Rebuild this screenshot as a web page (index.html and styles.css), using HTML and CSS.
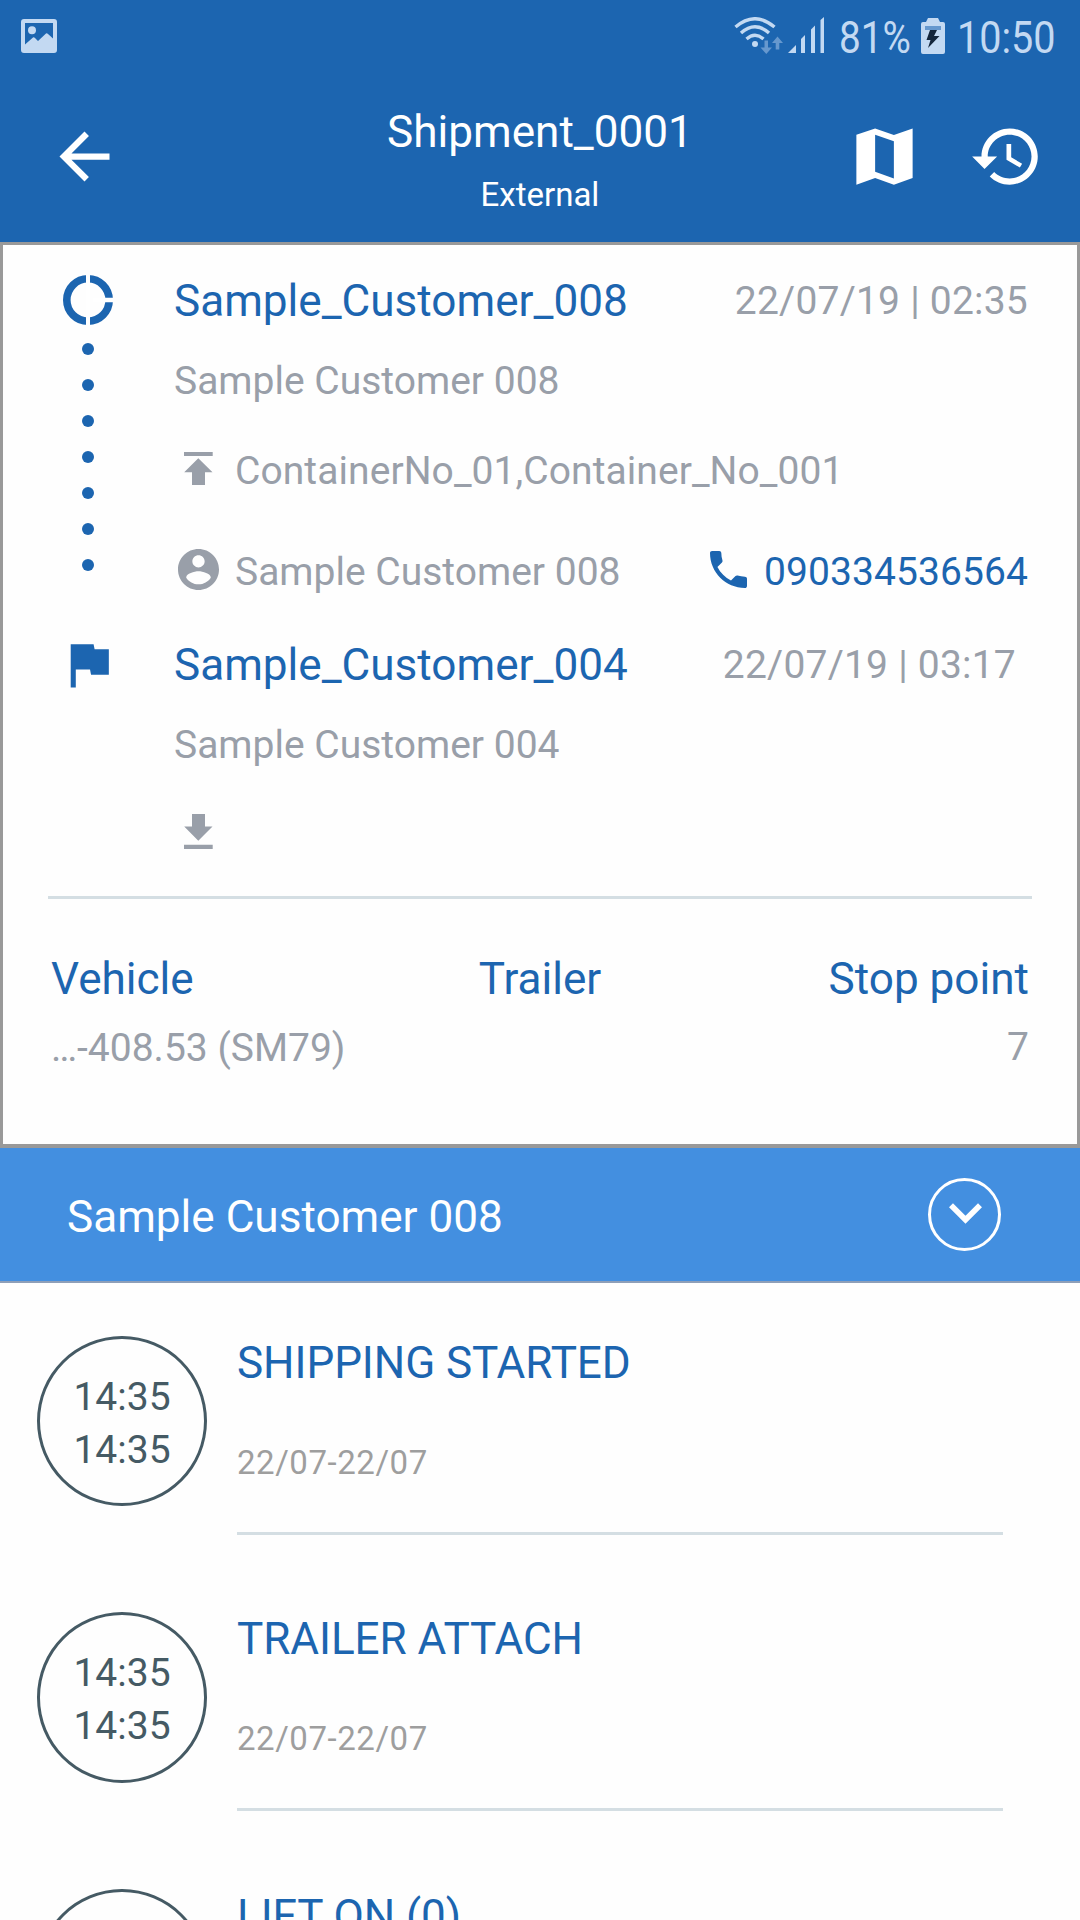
FILE: index.html
```html
<!DOCTYPE html>
<html lang="en">
<head>
<meta charset="utf-8">
<title>Shipment_0001</title>
<link rel="stylesheet" href="styles.css">
</head>
<body>
<header class="top">
  <div class="status">
    <svg class="status-picture" width="36" height="34" viewBox="0 0 36 34">
      <path fill-rule="evenodd" d="M3 0H33Q36 0 36 3V31Q36 34 33 34H3Q0 34 0 31V3Q0 0 3 0ZM4 4V25.500L12 18.500Q13 18 14 19L17 22L25 14.500Q26 14 27 15L32 19.500V4Z"/>
      <circle cx="11" cy="11.300" r="4"/>
    </svg>
    <div class="status-right">
      <svg class="wifi" width="50" height="38" viewBox="0 0 50 38">
        <g fill="none" stroke="#c3d9f2" stroke-width="3.400">
          <path d="M1.500 10Q21 -6.500 40.500 10"/>
          <path d="M7 16Q21 3.500 35 16"/>
          <path d="M12.500 22Q21 14.500 29.500 22"/>
        </g>
        <circle cx="21" cy="27" r="3"/>
        <path class="faint" d="M30.500 23.500h3.500v7h4l-5.700 6.500-5.800-6.500h4zM41.700 32.500h3.600v-6.500h3.700l-5.500-6.500-5.500 6.500h3.700z"/>
      </svg>
      <svg class="signal" width="37" height="36" viewBox="0 0 37 36">
        <path d="M0 36L8 28V36ZM13 22L17 18V36H13ZM23 12.500L27 8.500V36H23ZM32.500 3L36 0V36H32.500Z"/>
      </svg>
      <span class="status-text battery-level">81%</span>
      <svg class="battery" width="24" height="36" viewBox="0 0 24 36">
        <path d="M7 0H17L19 4H22Q24 4 24 6V34Q24 36 22 36H2Q0 36 0 34V6Q0 4 2 4H5Z"/>
        <path class="faint" d="M4 8H20V12H4Z"/>
        <path class="bolt" d="M9 12H16L13 18H18.500L7 30L9.500 22H5.500Z"/>
      </svg>
      <span class="status-text clock">10:50</span>
    </div>
  </div>
  <div class="appbar">
    <svg class="icon" width="75" height="75" viewBox="0 0 24 24"><path d="M20 11H7.830l5.590-5.590L12 4l-8 8 8 8 1.410-1.410L7.830 13H20v-2z"/></svg>
    <div class="titles">
      <h1 class="title">Shipment_0001</h1>
      <p class="subtitle">External</p>
    </div>
    <div class="actions">
      <svg class="icon" width="75" height="75" viewBox="0 0 24 24"><path fill-rule="evenodd" d="M3 5L9 3L15 5.100L21 3V18.900L15 21L9 18.900L3 21ZM9 5V16.900L15 19V7.100Z"/></svg>
      <svg class="icon" width="75" height="75" viewBox="0 0 24 24"><path d="M13 3c-4.970 0-9 4.030-9 9H1l3.890 3.890.07.14L9 12H6c0-3.870 3.130-7 7-7s7 3.130 7 7-3.130 7-7 7c-1.930 0-3.680-.79-4.940-2.060l-1.420 1.420C8.270 19.990 10.510 21 13 21c4.970 0 9-4.030 9-9s-4.030-9-9-9zm-1 5v5l4.280 2.540.72-1.210-3.500-2.080V8H12z"/></svg>
    </div>
  </div>
</header>

<section class="card">
  <div class="stop stop-start">
    <div class="rail">
      <svg width="50" height="50" viewBox="0 0 50 50">
        <circle cx="25" cy="25" r="21.200" fill="none" stroke="#1c65b0" stroke-width="7.600"/>
        <path d="M23 0H27V50H23ZM30 22.800H50V27.200H30Z" fill="#fff"/>
      </svg>
      <div class="dots"><i></i><i></i><i></i><i></i><i></i><i></i><i></i></div>
    </div>
    <div class="stop-body">
      <div class="row">
        <h2 class="name">Sample_Customer_008</h2>
        <span class="grey date">22/07/19 | 02:35</span>
      </div>
      <p class="grey address">Sample Customer 008</p>
      <div class="detail container-row">
        <svg class="detail-icon" width="41" height="33" viewBox="0 0 41 33"><path d="M6 0H34.700V4H6ZM20.300 6.300L34.500 20.300H27V33H14V20.300H6.200Z"/></svg>
        <span class="grey containers">ContainerNo_01,Container_No_001</span>
      </div>
      <div class="detail contact">
        <svg class="detail-icon contact-icon" width="41" height="41" viewBox="2 2 20 20"><path d="M12 2C6.480 2 2 6.480 2 12s4.480 10 10 10 10-4.480 10-10S17.520 2 12 2zm0 3c1.660 0 3 1.340 3 3s-1.340 3-3 3-3-1.340-3-3 1.340-3 3-3zm0 14.200c-2.500 0-4.710-1.280-6-3.220.03-1.990 4-3.080 6-3.080 1.990 0 5.970 1.090 6 3.080-1.290 1.940-3.500 3.220-6 3.220z"/></svg>
        <span class="grey">Sample Customer 008</span>
        <a class="phone">
          <svg class="phone-icon" width="37" height="37" viewBox="3 3 18 18"><path d="M6.620 10.790c1.440 2.830 3.760 5.140 6.590 6.590l2.200-2.200c.27-.27.67-.36 1.020-.24 1.120.37 2.330.57 3.570.57.55 0 1 .45 1 1V20c0 .55-.45 1-1 1-9.390 0-17-7.610-17-17 0-.55.45-1 1-1h3.500c.55 0 1 .45 1 1 0 1.250.2 2.450.57 3.570.11.35.03.74-.25 1.020l-2.200 2.200z"/></svg>
          090334536564
        </a>
      </div>
    </div>
  </div>
  <div class="stop stop-end">
    <div class="rail">
      <svg class="flag" width="61" height="61" viewBox="0 0 24 24"><path d="M14.400 6L14 4H5v17h2v-7h5.600l.4 2h7V6z"/></svg>
    </div>
    <div class="stop-body">
      <div class="row">
        <h2 class="name">Sample_Customer_004</h2>
        <span class="grey date">22/07/19 | 03:17</span>
      </div>
      <p class="grey address">Sample Customer 004</p>
      <svg class="detail-icon unload" width="41" height="35" viewBox="0 0 41 35"><path d="M14 0H27V12.500H34.500L20.300 26.700L6.200 12.500H14ZM6 30.700H34.700V35H6Z"/></svg>
    </div>
  </div>
  <div class="summary">
    <div class="cell">
      <h3 class="label">Vehicle</h3>
      <p class="grey value">…-408.53 (SM79)</p>
    </div>
    <div class="cell cell-mid">
      <h3 class="label">Trailer</h3>
    </div>
    <div class="cell cell-end">
      <h3 class="label">Stop point</h3>
      <p class="grey value">7</p>
    </div>
  </div>
</section>

<section class="group">
  <h2 class="group-name">Sample Customer 008</h2>
  <div class="toggle">
    <svg width="35" height="23" viewBox="0 0 35 23"><path d="M3 3.200L17.500 17.700L32 3.200" fill="none" stroke="#fff" stroke-width="5.600"/></svg>
  </div>
</section>

<ul class="events">
  <li class="event">
    <div class="times"><span>14:35</span><span>14:35</span></div>
    <div class="event-body">
      <h3 class="event-name">SHIPPING STARTED</h3>
      <p class="event-date">22/07-22/07</p>
    </div>
  </li>
  <li class="event">
    <div class="times"><span>14:35</span><span>14:35</span></div>
    <div class="event-body">
      <h3 class="event-name">TRAILER ATTACH</h3>
      <p class="event-date">22/07-22/07</p>
    </div>
  </li>
  <li class="event">
    <div class="times"></div>
    <div class="event-body">
      <h3 class="event-name">LIFT ON (0)</h3>
    </div>
  </li>
</ul>
</body>
</html>
```
FILE: styles.css
```css
* {
  box-sizing: border-box;
  margin: 0;
  padding: 0;
}

html,
body {
  width: 1080px;
  height: 1920px;
  overflow: hidden;
}

body {
  background: #fefefe;
  color: #1c65b0;
  font: 400 39px/46px Roboto, "Liberation Sans", sans-serif;
}

h1,
h2,
h3 {
  font-size: 44.100px;
  line-height: 54px;
  font-weight: 400;
  white-space: nowrap;
}

svg {
  display: block;
  flex: none;
}

/* Header */

.top {
  height: 242px;
  background: #1c65b0;
  color: #fff;
}

.status {
  display: flex;
  justify-content: space-between;
  align-items: flex-start;
  height: 72px;
  padding: 0 25px 0 21px;
  color: #c3d9f2;
  fill: #c3d9f2;
}

.status-picture {
  margin-top: 19px;
}

.status-right {
  display: flex;
  align-items: flex-start;
}

.wifi {
  margin-top: 17px;
}

.signal {
  margin: 17px 14px 0 4px;
}

.battery {
  margin: 18px 12px 0 11px;
}

.faint {
  fill: #6698ce;
}

.bolt {
  fill: #14263c;
}

.status-text {
  font-size: 45px;
  line-height: 53px;
  margin-top: 11px;
  transform: scaleX(0.87);
  transform-origin: left;
}

.battery-level {
  width: 71px;
  transform: scaleX(0.86);
}

.clock {
  width: 98px;
  transform: scaleX(0.88);
}

.appbar {
  display: grid;
  grid-template-columns: 1fr auto 1fr;
  height: 170px;
  padding: 0 36px 0 47px;
}

.appbar > .icon,
.actions {
  margin-top: 47px;
}

.icon {
  fill: #fff;
}

.titles {
  margin: 33px 0 0 -11px;
  text-align: center;
}

.subtitle {
  margin-top: 16px;
  font-size: 33px;
  line-height: 39px;
}

.actions {
  display: flex;
  justify-content: flex-end;
  gap: 47px;
}

/* Route card */

.card {
  height: 906px;
  border: 3px solid #999;
  border-bottom-width: 4px;
  padding: 29px 45px 0;
  background: #fefefe;
}

.grey {
  color: #999fa9;
  white-space: nowrap;
}

.stop {
  display: grid;
  grid-template-columns: 80px 1fr;
  column-gap: 46px;
  padding-right: 4px;
}

.stop-start {
  height: 364px;
}

.stop-end {
  height: 258px;
}

.rail {
  display: flex;
  flex-direction: column;
  align-items: center;
  padding-top: 1px;
}

.dots {
  display: flex;
  flex-direction: column;
  gap: 24px;
  margin-top: 18px;
}

.dots i {
  width: 12px;
  height: 12px;
  border-radius: 50%;
  background: #1c65b0;
}

.flag {
  margin-top: -5px;
  fill: #1c65b0;
}

.row {
  display: flex;
  justify-content: space-between;
}

.date {
  margin-top: 4px;
  letter-spacing: 0.220px;
}

.stop-end .date {
  margin-right: 12px;
}

.address {
  margin-top: 30px;
}

.detail {
  display: flex;
  align-items: flex-start;
}

.container-row {
  margin-top: 44px;
}

.containers {
  letter-spacing: 0.070px;
}

.contact {
  margin-top: 55px;
}

.detail-icon {
  margin: 4px 16px 0 4px;
  fill: #999fa9;
}

.contact-icon {
  margin-top: 0;
}

.phone {
  display: flex;
  margin-left: auto;
  letter-spacing: 0.080px;
}

.phone-icon {
  margin: 2px 17px 0 0;
  fill: #1c65b0;
}

.unload {
  margin-top: 46px;
}

.summary {
  display: grid;
  grid-template-columns: repeat(3, 1fr);
  border-top: 3px solid #d4dee3;
  padding: 53px 3px 0;
}

.cell-mid {
  text-align: center;
}

.cell-end {
  text-align: right;
}

.value {
  margin-top: 19px;
}

.cell-end .value {
  margin-top: 18px;
}

/* Customer group bar */

.group {
  display: flex;
  justify-content: space-between;
  height: 135px;
  padding: 0 79px 0 67px;
  border-bottom: 2px solid #8e9fb8;
  background: #438fe0;
  color: #fff;
}

.group-name {
  margin-top: 42px;
}

.toggle {
  display: flex;
  justify-content: center;
  width: 73px;
  height: 73px;
  margin-top: 30px;
  padding: 21px 0 0 2px;
  border: 3px solid #fff;
  border-radius: 50%;
}

/* Event list */

.events {
  list-style: none;
}

.event {
  display: flex;
  gap: 30px;
  height: 276.400px;
  padding: 53px 77px 0 37px;
}

.times {
  display: flex;
  flex: none;
  flex-direction: column;
  align-items: center;
  width: 170px;
  height: 170.400px;
  padding-top: 32px;
  border: 3px solid #455a64;
  border-radius: 50%;
  color: #455a64;
  line-height: 53px;
}

.event-body {
  flex: 1;
  height: 199px;
  border-bottom: 3px solid #d4dee3;
}

.event-name {
  letter-spacing: -0.080px;
}

.event-date {
  margin-top: 53px;
  color: #9e9e9e;
  font-size: 33px;
  line-height: 39px;
  letter-spacing: 0.550px;
}
```
